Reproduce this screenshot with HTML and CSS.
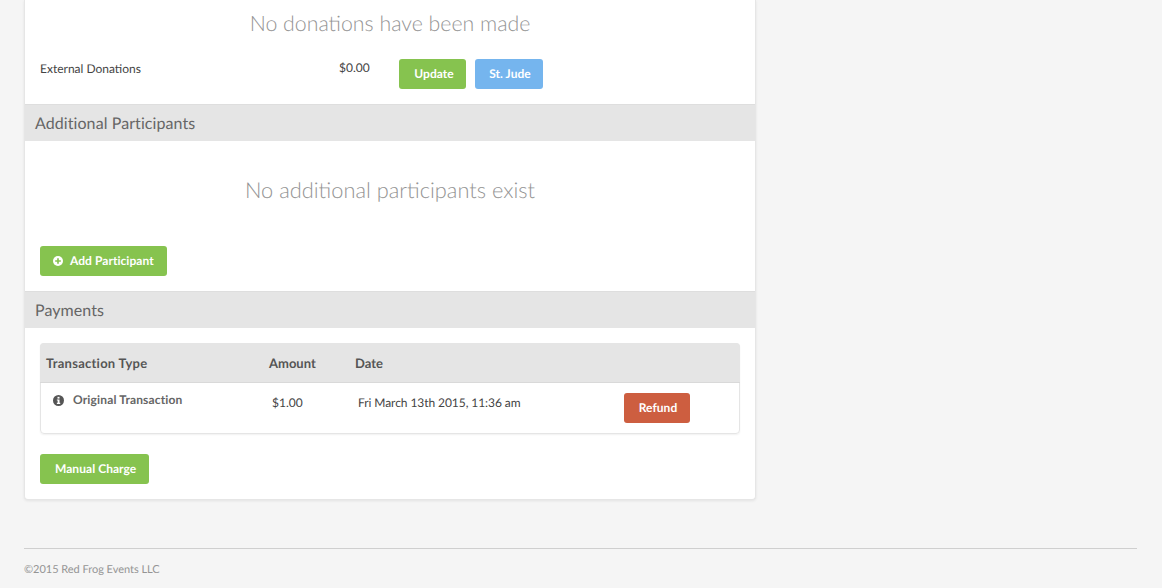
FILE: index.html
```html
<!DOCTYPE html>
<html lang="en">
<head>
<meta charset="utf-8">
<title>Registration</title>
<link rel="stylesheet" href="styles.css">
</head>
<body>
<main class="card">
  <h2 class="empty empty-first">No donations have been made</h2>
  <div class="donation-row">
    <span class="donation-label">External Donations</span>
    <span class="donation-amount">$0.00</span>
    <div class="donation-actions">
      <a class="btn btn-green btn-update">Update</a>
      <a class="btn btn-blue">St. Jude</a>
    </div>
  </div>
  <h3 class="section-head">Additional Participants</h3>
  <div class="section-body participants">
    <h2 class="empty empty-second">No additional participants exist</h2>
    <a class="btn btn-green btn-add">
      <svg class="icon-plus" viewBox="0 0 12 12" aria-hidden="true"><circle cx="6" cy="6" r="6" fill="#fff"/><path d="M6 2.6v6.8M2.6 6h6.8" stroke="#86c34f" stroke-width="2"/></svg>
      Add Participant
    </a>
  </div>
  <h3 class="section-head">Payments</h3>
  <div class="section-body payments">
    <div class="table">
      <div class="table-head">
        <span class="col-type">Transaction Type</span>
        <span class="col-amount">Amount</span>
        <span class="col-date">Date</span>
      </div>
      <div class="table-row">
        <span class="cell-type">
          <svg class="icon-info" viewBox="0 0 12 12" aria-hidden="true"><circle cx="6" cy="6" r="6" fill="#555"/><rect x="4.9" y="2" width="2.2" height="1.9" fill="#fff"/><path d="M4.2 4.9h2.9v3.6h.8v1.2H4.2V8.500h.9V6.100h-.9z" fill="#fff"/></svg>
          <span class="type-label">Original Transaction</span>
        </span>
        <span class="cell-amount">$1.00</span>
        <span class="cell-date">Fri March 13th 2015, 11:36 am</span>
        <a class="btn btn-red">Refund</a>
      </div>
    </div>
    <a class="btn btn-green btn-manual">Manual Charge</a>
  </div>
</main>
<footer class="footer">©2015 Red Frog Events LLC</footer>
</body>
</html>
```
FILE: styles.css
```css
* { box-sizing: border-box; }
html, body { height: 588px; overflow: hidden; }
body {
  margin: 0;
  padding: 0 25px 0 24px;
  background: #f5f5f5;
  font-family: "Lato", "Liberation Sans", sans-serif;
  font-size: 12px;
  color: #444;
  text-rendering: geometricPrecision;
}
.card {
  width: 732px;
  height: 500px;
  background: #fff;
  border: 1px solid #e6e6e6;
  border-top: 0;
  border-radius: 0 0 4px 4px;
  box-shadow: 0 1px 3px rgba(0,0,0,.08);
}
.empty {
  margin: 0;
  font-weight: 300;
  line-height: 26px;
  color: #949494;
  text-align: center;
}
.empty-first { padding-top: 10px; font-size: 21.3px; }
.donation-row {
  display: flex;
  height: 68px;
  padding: 23px 0 0 15px;
}
.donation-label { width: 299px; line-height: 20px; }
.donation-amount { width: 60px; line-height: 18px; }
.donation-actions { display: flex; gap: 9px; }
.btn {
  display: inline-flex;
  align-items: center;
  height: 30px;
  padding-bottom: 1px;
  border-radius: 3px;
  color: #fff;
  font-weight: 700;
  font-size: 12px;
  letter-spacing: .05px;
}
.donation-actions .btn { justify-content: center; }
.btn-update { width: 67px; padding-left: 3px; }
.btn-blue { width: 68px; padding-left: 2px; background: #75b5ee; }
.btn-green { background: #86c34f; }
.btn-red { width: 66px; justify-content: center; padding-left: 2px; background: #cd5e40; }
.section-head {
  margin: 0;
  height: 37px;
  padding: 0 10px;
  background: #e5e5e5;
  border-top: 1px solid #dedede;
  font-weight: 400;
  font-size: 16px;
  line-height: 38px;
  letter-spacing: .08px;
  color: #666;
}
.section-body { padding: 0 15px; }
.participants { height: 150px; }
.empty-second { padding: 36px 0 43px; margin: 0 -15px; font-size: 21.8px; }
.btn-add { width: 127px; padding-left: 13px; gap: 7px; }
.icon-plus { width: 10px; height: 10px; }
.payments { padding-top: 15px; }
.table {
  height: 91px;
  border: 1px solid #e5e5e5;
  border-radius: 4px;
  box-shadow: 0 1px 2px rgba(0,0,0,.06);
}
.table-head {
  display: flex;
  height: 40px;
  margin: -1px -1px 0;
  padding-left: 6px;
  background: #e5e5e5;
  border-bottom: 1px solid #d9d9d9;
  border-radius: 4px 4px 0 0;
  font-weight: 700;
  font-size: 13px;
  line-height: 40px;
  color: #555;
}
.col-type { width: 223px; letter-spacing: .25px; }
.col-amount { width: 86px; }
.table-row {
  display: flex;
  padding-top: 10px;
  line-height: 20px;
}
.cell-type {
  display: flex;
  align-items: center;
  gap: 9px;
  width: 231px;
  height: 14px;
  padding-left: 12px;
  font-weight: 700;
  font-size: 12px;
  color: #666;
}
.type-label { letter-spacing: .15px; }
.icon-info { width: 11px; height: 11px; }
.cell-amount { width: 86px; }
.cell-date { width: 266px; letter-spacing: -.07px; }
.btn-manual { width: 109px; margin-top: 20px; padding-left: 15px; }
.footer {
  margin-top: 48px;
  width: 1113px;
  border-top: 1px solid #cfcfcf;
  padding-top: 14px;
  font-size: 11px;
  line-height: 14px;
  letter-spacing: -.03px;
  color: #949494;
}
```
